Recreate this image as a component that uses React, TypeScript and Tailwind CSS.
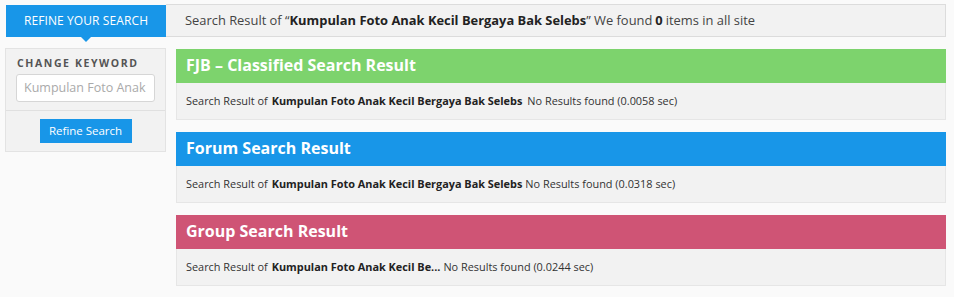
import React from "react";

type Section = {
  title: string;
  color: string;
  keyword: string;
  gap: string;
  time: string;
};

const keyword = "Kumpulan Foto Anak Kecil Bergaya Bak Selebs";

const sections: Section[] = [
  { title: "FJB – Classified Search Result", color: "bg-[#7dd36d]", keyword, gap: "ml-[5px]", time: "0.0058" },
  { title: "Forum Search Result", color: "bg-[#1896e8]", keyword, gap: "ml-[3px]", time: "0.0318" },
  { title: "Group Search Result", color: "bg-[#cf5475]", keyword: "Kumpulan Foto Anak Kecil Be...", gap: "ml-[3px]", time: "0.0244" },
];

function ResultBox({ section }: { section: Section }) {
  return (
    <div className="flex flex-col">
      {/* Header */}
      <div className={`${section.color} h-[34px] flex items-center pl-[10px] pb-[2px]`}>
        <h2 className="text-white text-[16px] font-bold">{section.title}</h2>
      </div>
      {/* Body */}
      <div className="bg-[#f2f2f2] border border-t-0 border-[#e6e6e6] h-[37px] flex items-center pl-[9px] text-[10.9px] text-[#333]">
        <span>Search Result of</span>
        <b className="ml-[4px] font-bold text-[#222]">{section.keyword}</b>
        <span className={section.gap}>No Results found ({section.time} sec)</span>
      </div>
    </div>
  );
}

export default function App() {
  return (
    <div
      className="w-[954px] h-[297px] bg-[#fafafa] overflow-hidden"
      style={{ fontFamily: '"Open Sans", "Noto Sans", sans-serif' }}
    >
      {/* Top bar */}
      <div className="flex pt-[4px] pl-[6px] pr-[8px]">
        <div className="relative w-[160px] h-[32px] mt-[1px] bg-[#1896e8] flex items-center justify-center">
          <span className="text-white text-[12px] tracking-[0.1px]">REFINE YOUR SEARCH</span>
          <div className="absolute left-[75px] -bottom-[5px] w-0 h-0 border-l-[5px] border-r-[5px] border-t-[5px] border-l-transparent border-r-transparent border-t-[#1896e8]" />
        </div>
        <div className="flex-1 h-[33px] bg-[#f2f2f2] border border-l-0 border-[#dcdcdc] flex items-center pl-[19px] text-[12.9px] text-[#444]">
          <span>Search Result of “</span>
          <b className="font-bold text-[#222]">{keyword}</b>
          <span>” We found </span>
          <b className="font-bold text-[#222] mx-[3px]">0</b>
          <span>items in all site</span>
        </div>
      </div>

      <div className="flex pl-[5px] pr-[8px] mt-[11px] gap-[10px]">
        {/* Sidebar */}
        <div className="w-[161px] shrink-0 self-start bg-[#f2f2f2] border border-[#e3e3e3] h-[104px] flex flex-col">
          <div className="px-[10px] pt-[7px] pb-[8px] border-b border-[#e0e0e0]">
            <p className="text-[10.5px] font-bold text-[#555] tracking-[1.6px] pl-[1px]">CHANGE KEYWORD</p>
            <input
              readOnly
              placeholder="Kumpulan Foto Anak Kecil Bergaya Bak Selebs"
              className="mt-[2px] w-full h-[28px] bg-white border border-[#d6d6d6] rounded-[3px] px-[7px] text-[12.5px] placeholder:text-[#aaa] outline-none"
            />
          </div>
          <div className="flex justify-center pt-[8px]">
            <button className="w-[92px] h-[24px] bg-[#1896e8] text-white text-[11.5px]">Refine Search</button>
          </div>
        </div>

        {/* Results */}
        <div className="flex-1 flex flex-col gap-[12px] mt-[1px]">
          {sections.map((s) => (
            <ResultBox key={s.title} section={s} />
          ))}
        </div>
      </div>
    </div>
  );
}
